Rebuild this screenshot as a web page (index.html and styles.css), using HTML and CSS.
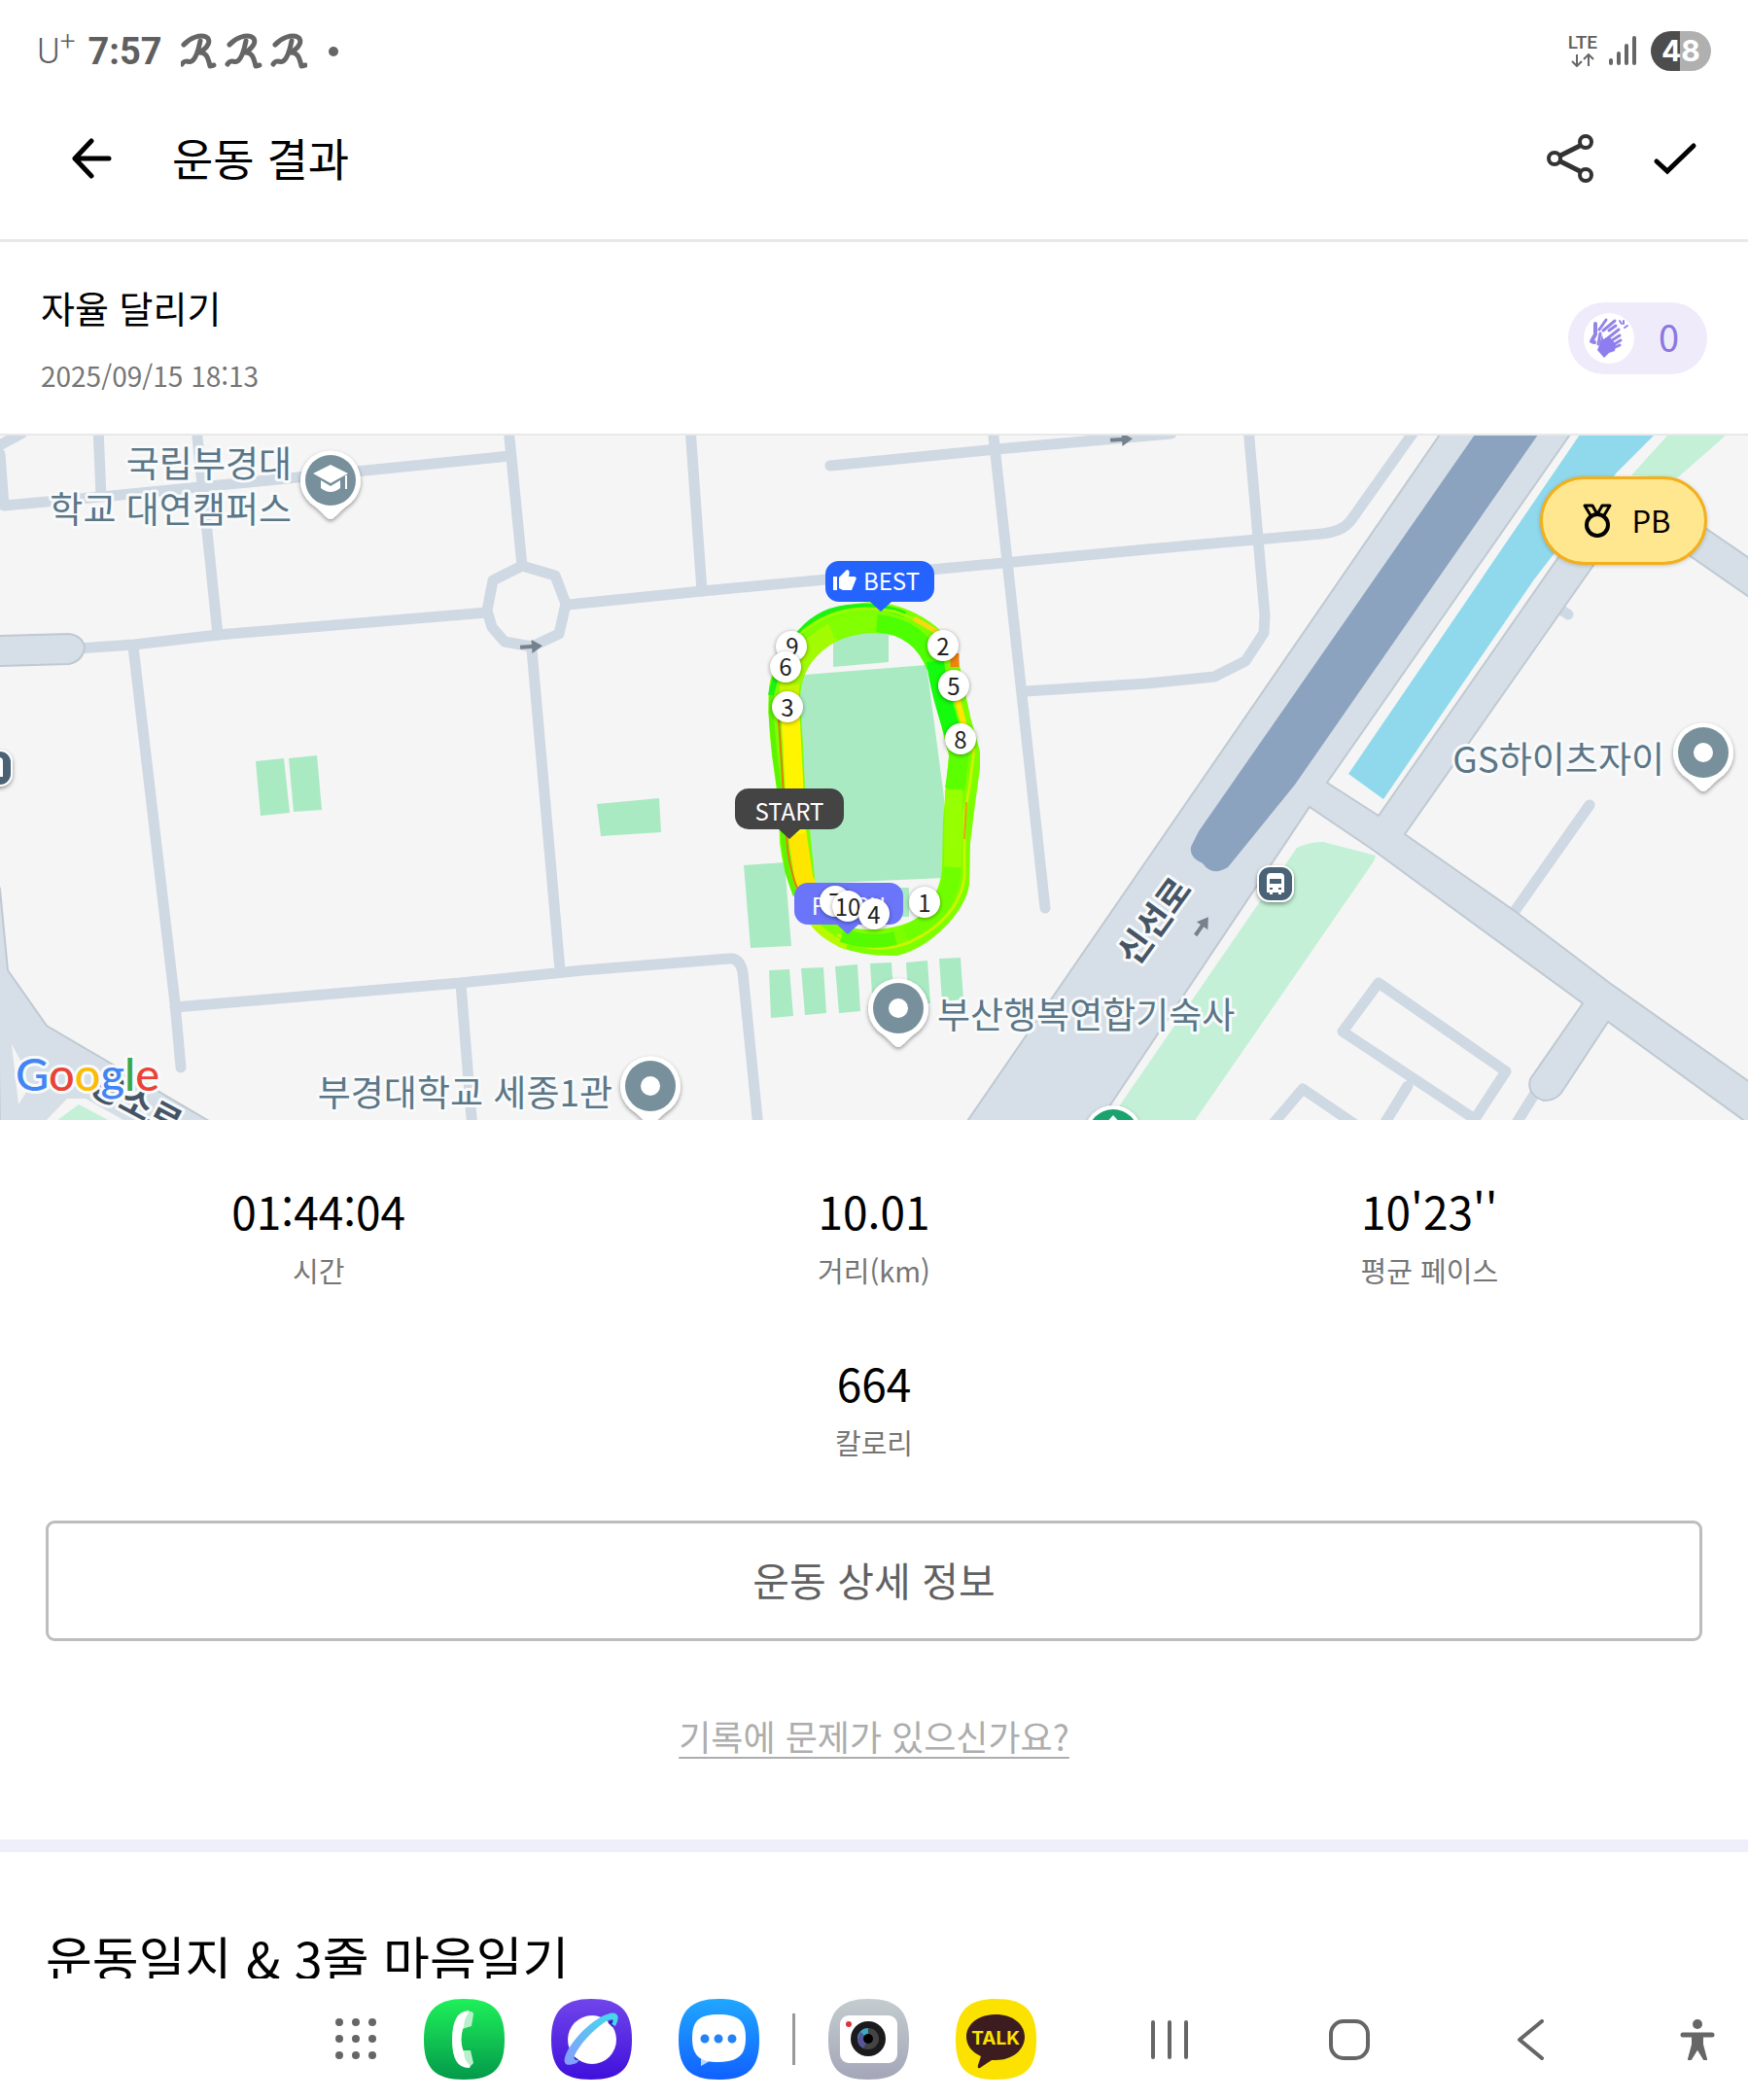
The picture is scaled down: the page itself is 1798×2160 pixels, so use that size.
FILE: index.html
```html
<!DOCTYPE html>
<html lang="ko">
<head>
    <meta charset="UTF-8">
    <meta name="viewport" content="width=device-width, initial-scale=1.0">
    <title>운동 결과</title>
    <link rel="stylesheet" href="styles.css">
</head>
<body>

<!-- Status bar -->
<div class="status-bar">
    <div class="status-left">
        <span class="carrier">U<sup>+</sup></span>
        <span class="clock">7:57</span>
        <svg class="notices" viewBox="0 0 130 38" aria-hidden="true">
            <defs>
                <g id="runner">
                    <path d="M3 12C9 5 20 1 26 4c6 3 2 12-8 16 8-1 10 5 12 14l4-1" stroke-width="5"/>
                    <path d="M20 8C18 18 15 27 11 29c-3 2-6-3-10 3" stroke-width="5"/>
                </g>
            </defs>
            <g fill="none" stroke="#666" stroke-linecap="round" stroke-linejoin="round">
                <use href="#runner"/>
                <use href="#runner" x="47"/>
                <use href="#runner" x="94"/>
            </g>
        </svg>
        <span class="more-dot"></span>
    </div>
    <div class="status-right">
        <div class="network">
            <span>LTE</span>
            <svg viewBox="0 0 24 14" aria-hidden="true">
                <path d="M6 1v11M1 8l5 5 5-5M18 13V2M13 6l5-5 5 5" fill="none" stroke="#666" stroke-width="2"/>
            </svg>
        </div>
        <svg class="signal" viewBox="0 0 28 30" aria-hidden="true">
            <path d="M2 25v3M10 18v10M18 10v18M26 2v26" stroke="#666" stroke-width="4" stroke-linecap="round"/>
        </svg>
        <span class="battery">48</span>
    </div>
</div>

<!-- App bar -->
<header class="app-bar">
    <button class="icon-button back" aria-label="뒤로">
        <svg viewBox="0 0 42 42"><path d="M39 21H4M21 3L4 21l17 18" fill="none" stroke="#000" stroke-width="5" stroke-linecap="round" stroke-linejoin="round"/></svg>
    </button>
    <h1>운동 결과</h1>
    <button class="icon-button share" aria-label="공유">
        <svg viewBox="0 0 50 50">
            <g fill="none" stroke="#333" stroke-width="4">
                <path d="M15 22L35 12M15 28l20 10" stroke-width="5"/>
                <circle cx="9" cy="25" r="6"/>
                <circle cx="41" cy="8" r="6"/>
                <circle cx="41" cy="42" r="6"/>
            </g>
        </svg>
    </button>
    <button class="icon-button done" aria-label="완료">
        <svg viewBox="0 0 46 34"><path d="M4 20l11 10L42 4" fill="none" stroke="#000" stroke-width="5" stroke-linecap="round"/></svg>
    </button>
</header>

<main class="content">
    <section class="session">
        <div>
            <h2>자율 달리기</h2>
            <p class="date">2025/09/15 18:13</p>
        </div>
        <button class="clap-button" aria-label="박수 0">
            <svg viewBox="0 0 52 52" aria-hidden="true">
                <circle cx="26" cy="26" r="26" fill="#fff"/>
                <g fill="none" stroke="#9384e8" stroke-width="3" stroke-linecap="round" stroke-linejoin="round">
                    <path d="M12 11v11l-4 7 3 1" stroke-width="4"/>
                    <path d="M16 17l7-10M20 18L32 8M26 18l7-5M17 21l-2 11"/>
                    <path d="M22 28l14-11M26 30l11-7M28 34l10-6M28 37l9-4" stroke-width="3"/>
                    <path d="M37 8l2 3M41 8v3M42 15l3-2" stroke-width="2"/>
                </g>
                <path d="M19 22l1 5 6-3 7 8-1 7-6 2-5 5-7-8 2-5z" fill="#8e7df0"/>
            </svg>
            <span>0</span>
        </button>
    </section>

    <!-- Route map -->
    <section class="map">
        <svg class="map-canvas" viewBox="0 448 1798 704" role="img" aria-label="달리기 경로 지도">
            <defs>
                <filter id="shadow" x="-30%" y="-30%" width="160%" height="170%">
                    <feDropShadow dx="0" dy="2" stdDeviation="2" flood-opacity=".4"/>
                </filter>
                <g id="pin">
                    <path d="M0 40c-4 0-7-6-16-13A31 31 0 1 1 16 27C7 34 4 40 0 40z" fill="#fff" filter="url(#shadow)"/>
                    <circle r="26" fill="#78909c"/>
                </g>
                <g id="bus">
                    <rect x="-19" y="-19" width="38" height="38" rx="13" fill="#fff" filter="url(#shadow)"/>
                    <rect x="-17" y="-17" width="34" height="34" rx="11" fill="#4a6275"/>
                    <path d="M-9-7q0-4 4-4H5q4 0 4 4V9H6v2H3V9h-6v2h-3V9h-3z" fill="#fff"/>
                    <path d="M-6-5H6v5H-6zM-6 4h3v2h-3zM3 4h3v2H3z" fill="#4a6275"/>
                </g>
                <path id="arrow" d="M-11-2H1v-5L12 0 1 7V2h-12z" fill="#75818d"/>
            </defs>

            <rect y="448" width="1798" height="704" fill="#f5f5f5"/>

            <!-- small roads -->
            <g class="road">
                <path d="M-4 460L22 446M0 467l4 53 100-9 202-20 218-22M101 440l3 71M202 440l22 213"/>
                <path d="M80 667l58-4 86-10 277-23M584 622l138-14 310-29 148-14 180-16q20-2 29-13l66-93"/>
                <path d="M537 582l34 10 11 29-7 31-28 13-28-5-13-15-5-17 6-31z"/>
                <path d="M523 440l14 142M547 668l29 330M137 665l43 367 6 66M180 1036l293-25 127-13 150-12q11-1 14 14l16 160M474 1012l12 150"/>
                <path d="M710 440l12 168M854 479l171-17 180-16M1021 440l54 494M1055 711l125-8 69-7 32-16 19-29 1-18-17-193"/>
                <path d="M1635 828l-79 112M1604 626l9 6M1418 1011l131 91-32 49-136-90zM1448 1117l-26 42M1306 1160l34-40 56 38M1578 1126l-20 32"/>
            </g>

            <!-- parks and courts -->
            <g fill="#c3f0d6">
                <path d="M1716 447h60l-50 44-48-2zM1334 872q12-6 27-6l54 14-2 6-185 268h-88z"/>
            </g>
            <g fill="#a9eac3">
                <path d="M263 783l29-3 6 56-30 3zM297 780l29-3 5 56-29 2zM614 827l64-6 2 35-62 4zM765 890l42-3 7 86-42 2z"/>
                <path d="M791 998l21-1 4 48-23 2zM824 996l23-1 3 47-22 2zM859 994l23-2 3 48-22 2zM895 991l22-1 3 47-22 2zM932 990l22-2 3 44-22 4zM966 986l22-1 3 43-22 2z"/>
                <path d="M815 695l138-11 8 60 10 76v83l-136 6zM857 650l57-2v33l-57 5zM920 913h15v30h-15z"/>
            </g>

            <!-- main roads -->
            <g class="main-road">
                <path d="M-4 654l75-2q14 2 16 14-2 14-16 17l-75 2z"/>
                <path d="M-4 900l4 15 8 83 40 57 172 101-172 4-48 4z"/>
                <path d="M1700 506l102 70v40l-62-43-50-33z"/>
                <path d="M1483 444L993 1156h136l218-326 65 44 216 158-54 78q-4 16 14 22 12 0 18-8l48-73 150 109v-44l-147-104-99-75-113-79 195-278 40-60h-40l-222 319-53-34 252-361z"/>
            </g>
            <path d="M44 1156l25-26h19l46 26z" fill="#f5f5f5"/>
            <path d="M54 1156l27-20 38 20z" fill="#c3f0d6"/>
            <path d="M12 1074l13 24 4 22-10 16z" fill="#f5f5f5"/>
            <path d="M1517 447h65l-250 360-69 85q-16 10-26-4-14-6-12-17l8-16z" fill="#8ba3bf"/>
            <path d="M1625 447h77l-39 39-85 110-155 226-36-26z" fill="#90d9ec"/>

            <use href="#arrow" transform="translate(546 665) rotate(-4)"/>
            <use href="#arrow" transform="translate(1153 452) rotate(-4)"/>
            <use href="#arrow" transform="translate(1236 953) rotate(-55)"/>

            <!-- running track -->
            <path fill="#7dff00" stroke="#7dff00" stroke-width="2" stroke-linejoin="round" fill-rule="evenodd" d="M903 620Q855 620 820 653 796 680 792 707 790 733 795 777L802 827 803 867Q806 895 817 920 828 950 863 973 890 983 922 982 953 975 980 943 994 925 996 910L997 867 1002 827 1007 790V773L997 737 985 680Q980 660 962 645 937 625 903 620zM897 650Q863 652 843 670 822 690 822 720L825 767 827 810 832 853 837 903Q840 935 850 947 865 957 900 957 930 955 947 943 968 920 970 893L971 843 975 800 977 777 970 750 960 703Q950 655 913 651z"/>
            <g fill="none" stroke-linejoin="round">
                <path d="M794 707l-1 26 4 44 7 50 2 40 4 30 8 24" stroke="#5cf500" stroke-width="5"/>
                <path d="M793 715q6-30 25-58 20-28 53-32 35-4 60 7" stroke="#1df312" stroke-width="6"/>
                <path d="M812 708q8-38 45-58" stroke="#a2fb00" stroke-width="20"/>
                <path d="M855 648q22-8 50-7" stroke="#82ff00" stroke-width="18"/>
                <path d="M902 641q45 4 60 45" stroke="#4dff00" stroke-width="18"/>
                <path d="M812 727V704" stroke="#c8f500" stroke-width="20"/>
                <path d="M813 735l4 75 3 50" stroke="#fff500" stroke-width="19"/>
                <path d="M820 858l7 46 6 12" stroke="#ffe600" stroke-width="19"/>
                <path d="M801 740l5 77 4 55q4 30 12 46" stroke="#e87b08" stroke-width="2"/>
                <path d="M962 680q4 34 22 85" stroke="#14fb0e" stroke-width="18"/>
                <path d="M987 772q-2 20-5 40" stroke="#5cff00" stroke-width="20"/>
                <path d="M981 812l-1 80" stroke="#96ff00" stroke-width="18"/>
                <path d="M980 892q-4 48-48 70" stroke="#70ff00" stroke-width="18"/>
                <path d="M820 655q40-38 100-26l24 9 24 16" stroke="#9dfc00" stroke-width="3"/>
                <path d="M940 636l24 14" stroke="#f6d913" stroke-width="5"/>
                <path d="M982 672v14" stroke="#f28110" stroke-width="9"/>
                <path d="M985 720l7 27" stroke="#ffe500" stroke-width="6"/>
                <path d="M1002 770l-4 34-6 34v65q-6 42-56 66-40 16-75-8" stroke="#c9f500" stroke-width="3"/>
                <path d="M994 825l-2 38" stroke="#e0a612" stroke-width="2"/>
                <path d="M837 949q10 14 34 24" stroke="#b8fb00" stroke-width="8"/>
                <path d="M866 962q30 10 55 3" stroke="#57fb00" stroke-width="14"/>
            </g>

            <!-- places -->
            <g class="place">
                <text x="300" y="491" text-anchor="end">국립부경대</text>
                <text x="300" y="538" text-anchor="end">학교 대연캠퍼스</text>
                <text x="964" y="1058">부산행복연합기숙사</text>
                <text x="630" y="1138" text-anchor="end">부경대학교 세종1관</text>
                <text x="1712" y="795" text-anchor="end">GS하이츠자이</text>
            </g>
            <g class="street">
                <text transform="translate(1188 948) rotate(-54)" y="12" text-anchor="middle">신선로</text>
                <text transform="translate(140 1136) rotate(28)" y="12" text-anchor="middle">용소로</text>
            </g>
            <use href="#pin" x="340" y="494"/>
            <path d="M340 478l18 9-18 10-18-10zM330 494v8q10 8 20 0v-8l-10 6zM355 489h2v14h-2z" fill="#fff"/>
            <use href="#pin" x="924" y="1037"/>
            <circle cx="924" cy="1037" r="10" fill="#fff"/>
            <use href="#pin" x="669" y="1117"/>
            <circle cx="669" cy="1117" r="10" fill="#fff"/>
            <use href="#pin" x="1752" y="774"/>
            <circle cx="1752" cy="774" r="10" fill="#fff"/>
            <use href="#bus" x="1312" y="909"/>
            <use href="#bus" x="-6" y="790"/>
            <circle cx="1145" cy="1167" r="30" fill="#fff" filter="url(#shadow)"/>
            <circle cx="1145" cy="1167" r="26" fill="#1aa36f"/>
            <path d="M1145 1147l8 9h-16z" fill="#fff"/>

            <text class="google" x="16" y="1122"><tspan fill="#4285f4">G</tspan><tspan fill="#ea4335">o</tspan><tspan fill="#fbbc05">o</tspan><tspan fill="#4285f4">g</tspan><tspan fill="#34a853">l</tspan><tspan fill="#ea4335">e</tspan></text>

            <!-- route markers -->
            <g class="flag">
                <path d="M863 577h84a14 14 0 0 1 14 14v14a14 14 0 0 1-14 14h-30l-11 10-11-10h-32a14 14 0 0 1-14-14v-14a14 14 0 0 1 14-14z" fill="#2563ff"/>
                <path d="M857 593h4v14h-4zM863 594l8-8q4 0 2 7h6q3 1 1 4l-4 10h-9l-4-2z" fill="#fff"/>
                <text x="917" y="607">BEST</text>
                <path d="M770 811h84a14 14 0 0 1 14 14v14a14 14 0 0 1-14 14h-31l-11 10-11-10h-31a14 14 0 0 1-14-14v-14a14 14 0 0 1 14-14z" fill="#444"/>
                <text x="812" y="844">START</text>
                <path d="M831 908h84a14 14 0 0 1 14 14v15a14 14 0 0 1-14 14h-32l-11 10-11-10h-30a14 14 0 0 1-14-14v-15a14 14 0 0 1 14-14z" fill="#6b75fa"/>
                <text x="873" y="941">FINISH</text>
            </g>
            <g class="km">
                <circle cx="814" cy="665" r="16"/><text x="815" y="674">9</text>
                <circle cx="808" cy="686" r="16"/><text x="808" y="695">6</text>
                <circle cx="810" cy="727" r="16"/><text x="810" y="737">3</text>
                <circle cx="970" cy="664" r="16"/><text x="970" y="674">2</text>
                <circle cx="981" cy="705" r="16"/><text x="981" y="715">5</text>
                <circle cx="988" cy="760" r="16"/><text x="988" y="770">8</text>
                <circle cx="859" cy="927" r="16"/><text x="859" y="937">7</text>
                <circle cx="951" cy="928" r="16"/><text x="951" y="938">1</text>
                <circle cx="872" cy="932" r="16"/><text x="872" y="942">10</text>
                <circle cx="899" cy="940" r="16"/><text x="899" y="950">4</text>
            </g>
        </svg>
        <button class="pb-button">
            <svg viewBox="0 0 32 36" aria-hidden="true">
                <g fill="none" stroke="#000" stroke-width="4" stroke-linejoin="round">
                    <circle cx="16" cy="23" r="11"/>
                    <path d="M9 13L3 3h8l5 9 5-9h8l-6 10" stroke-width="3"/>
                </g>
            </svg>
            PB
        </button>
    </section>

    <!-- Summary -->
    <dl class="stats">
        <div class="stat"><dd>01:44:04</dd><dt>시간</dt></div>
        <div class="stat"><dd>10.01</dd><dt>거리(km)</dt></div>
        <div class="stat"><dd>10'23''</dd><dt>평균 페이스</dt></div>
        <div class="stat"><dd>664</dd><dt>칼로리</dt></div>
    </dl>

    <button class="detail-button">운동 상세 정보</button>
    <a class="report-link" href="#">기록에 문제가 있으신가요?</a>

    <section class="diary">
        <h2>운동일지 &amp; 3줄 마음일기</h2>
    </section>
</main>

<!-- Task bar -->
<nav class="task-bar">
    <div class="apps">
        <button class="nav-button" aria-label="앱 목록">
            <svg class="drawer" viewBox="0 0 43 43">
                <path d="M4 4h0M21 4h0M38 4h0M4 21h0M21 21h0M38 21h0M4 38h0M21 38h0M38 38h0" stroke="#666" stroke-width="8" stroke-linecap="round"/>
            </svg>
        </button>
        <button class="nav-button" aria-label="전화">
            <svg class="app" viewBox="0 0 83 83">
                <defs>
                    <path id="tile" d="M41 0C71 0 83 12 83 42S71 83 41 83 0 71 0 42 12 0 41 0z"/>
                    <linearGradient id="green" x2="0" y2="1"><stop stop-color="#1ff05a"/><stop offset="1" stop-color="#03994a"/></linearGradient>
                    <linearGradient id="violet" x2="0" y2="1"><stop stop-color="#7145ea"/><stop offset="1" stop-color="#3f10dc"/></linearGradient>
                    <linearGradient id="blue" x2="0" y2="1"><stop stop-color="#20a7ff"/><stop offset="1" stop-color="#1060ff"/></linearGradient>
                    <linearGradient id="silver" x2="0" y2="1"><stop stop-color="#c3cccf"/><stop offset="1" stop-color="#a4a6b8"/></linearGradient>
                    <linearGradient id="ring" x1="1" x2="0" y2="1"><stop stop-color="#40ddeb"/><stop offset="1" stop-color="#879bff"/></linearGradient>
                </defs>
                <use href="#tile" fill="url(#green)"/>
                <path d="M41 15l7-2q3 0 3 3l-2 12-10 3zM39 53l9 0 3 13-5 5z" fill="#b9f0cb"/>
                <path d="M46 12q-17 1-17 30t17 29q3 0 0-4-4-4-5-12-5-13 0-27 1-9 4-12 3-4 1-4z" fill="#fff"/>
            </svg>
        </button>
        <button class="nav-button" aria-label="인터넷">
            <svg class="app" viewBox="0 0 83 83">
                <use href="#tile" fill="url(#violet)"/>
                <circle cx="42" cy="42" r="25" fill="#fff"/>
                <path d="M58 24l8-3-3 8zM24 60l6 4-8 2z" fill="#3319b5"/>
                <path d="M62 26c4-6 0-6-7-2-13 9-25 22-31 34-1 4 0 5 5 5l-3 3c-8 3-14 3-12-6C20 42 44 19 60 15c9-2 11 4 6 13z" fill="url(#ring)"/>
            </svg>
        </button>
        <button class="nav-button" aria-label="메시지">
            <svg class="app" viewBox="0 0 83 83">
                <use href="#tile" fill="url(#blue)"/>
                <path d="M23 61v8l9-5z" fill="#bcd7ff"/>
                <path d="M41 16c20 0 28 6 28 24s-8 25-28 25-27-7-27-25 8-24 27-24z" fill="#fff"/>
                <path d="M27 41h0M41 41h0M55 41h0" stroke="#2382f5" stroke-width="9" stroke-linecap="round"/>
            </svg>
        </button>
        <span class="separator"></span>
        <button class="nav-button" aria-label="카메라">
            <svg class="app" viewBox="0 0 83 83">
                <use href="#tile" fill="url(#silver)"/>
                <rect x="12" y="17" width="59" height="49" rx="9" fill="#fff"/>
                <circle cx="21" cy="26" r="3" fill="#e0323c"/>
                <circle cx="41" cy="41" r="18" fill="#1b1b1d"/>
                <circle cx="41" cy="41" r="11" fill="#444"/>
                <path d="M30 41a11 11 0 0 1 11-11v11z" fill="#36a9c0"/>
                <path d="M30 41a11 11 0 0 0 6 10l5-10-8-7z" fill="#57569b"/>
                <circle cx="41" cy="41" r="5" fill="#000"/>
            </svg>
        </button>
        <button class="nav-button" aria-label="카카오톡">
            <svg class="app" viewBox="0 0 83 83">
                <use href="#tile" fill="#fbe200"/>
                <path d="M41 16c18 0 30 10 30 23S59 63 41 63h-4l-12 8q-3 1-2-3l3-9c-9-4-15-11-15-20 0-13 12-23 30-23z" fill="#3c1c1e"/>
                <text class="talk" x="41" y="47">TALK</text>
            </svg>
        </button>
    </div>
    <div class="keys">
        <button class="nav-button" aria-label="최근 앱">
            <svg class="key" viewBox="0 0 42 42"><path d="M4 3v36M21 3v36M38 3v36" stroke="#666" stroke-width="4" stroke-linecap="round"/></svg>
        </button>
        <button class="nav-button" aria-label="홈">
            <svg class="key" viewBox="0 0 42 42"><rect x="2" y="2" width="38" height="38" rx="13" fill="none" stroke="#666" stroke-width="4"/></svg>
        </button>
        <button class="nav-button" aria-label="이전">
            <svg class="key" viewBox="0 0 42 42"><path d="M34 2L11 21l23 19" fill="none" stroke="#666" stroke-width="4" stroke-linecap="round" stroke-linejoin="round"/></svg>
        </button>
        <button class="nav-button accessibility" aria-label="접근성">
            <svg class="key" viewBox="0 0 42 42">
                <g fill="#666" stroke="#666" stroke-linecap="round" stroke-linejoin="round">
                    <circle cx="21" cy="5" r="5" stroke="none"/>
                    <path d="M6 16h30" stroke-width="5"/>
                    <path d="M17 18h8v8l4 15-8-13-8 13 4-15z" stroke-width="4"/>
                </g>
            </svg>
        </button>
    </div>
</nav>

</body>
</html>
```

FILE: styles.css
```css
* {
    box-sizing: border-box;
}
body {
    margin: 0;
    height: 100vh;
    display: flex;
    flex-direction: column;
    background-color: #fff;
    color: #000;
    font-family: "Noto Sans CJK KR", sans-serif;
}
button {
    padding: 0;
    border: none;
    background: none;
    color: inherit;
    font-family: inherit;
    cursor: pointer;
}
svg {
    display: block;
}
h1, h2, p, dl, dd {
    margin: 0;
    font-weight: 400;
}

/* Status bar */
.status-bar {
    flex: none;
    height: 104px;
    padding: 0 38px;
    display: flex;
    align-items: center;
    justify-content: space-between;
    color: #5f5f5f;
    font-family: Roboto, sans-serif;
}
.status-left, .status-right {
    display: flex;
    align-items: center;
}
.status-left {
    padding-top: 2px;
}
.carrier {
    font-size: 36px;
    font-weight: 300;
    line-height: 40px;
    margin-right: 13px;
}
.carrier sup {
    font-size: 28px;
    line-height: 1px;
}
.clock {
    font-size: 38px;
    font-weight: 700;
    margin-right: 19px;
}
.notices {
    width: 130px;
    height: 38px;
}
.more-dot {
    width: 10px;
    height: 10px;
    margin-left: 22px;
    border-radius: 50%;
    background-color: #666;
}
.network {
    display: flex;
    flex-direction: column;
    align-items: center;
    gap: 3px;
    font-size: 19px;
    font-weight: 500;
    line-height: 16px;
}
.network svg {
    width: 24px;
    height: 14px;
}
.signal {
    width: 28px;
    height: 30px;
    margin: 0 15px 0 12px;
}
.battery {
    width: 62px;
    border-radius: 21px;
    background: linear-gradient(90deg, #4d4d4d 48%, #b0b0b0 48%);
    color: #fff;
    font-family: Inter, sans-serif;
    font-size: 30px;
    font-weight: 700;
    line-height: 41px;
    text-align: center;
}

/* App bar */
.app-bar {
    flex: none;
    height: 145px;
    padding: 0 52px 24px 73px;
    display: flex;
    align-items: center;
    border-bottom: 3px solid #e8e8e8;
}
.app-bar h1 {
    flex: 1;
    margin-left: 62px;
    padding-bottom: 4px;
    font-size: 46px;
    line-height: 60px;
}
.back svg {
    width: 42px;
    height: 42px;
}
.share svg {
    width: 50px;
    height: 50px;
}
.done svg {
    width: 46px;
    height: 34px;
    margin-left: 60px;
}

.content {
    flex: 1;
    min-height: 0;
    overflow: hidden;
    display: flex;
    flex-direction: column;
}
.content > * {
    flex: none;
}

/* Session title */
.session {
    padding: 43px 42px 40px;
    display: flex;
    align-items: center;
    justify-content: space-between;
    border-bottom: 2px solid #e8e8e8;
}
.session h2 {
    font-size: 38px;
    line-height: 48px;
}
.date {
    margin-top: 26px;
    color: #757575;
    font-size: 28px;
    line-height: 40px;
}
.clap-button {
    width: 143px;
    height: 74px;
    margin-bottom: 3px;
    padding: 0 29px 0 16px;
    display: flex;
    align-items: center;
    justify-content: space-between;
    border-radius: 37px;
    background-color: #efebfb;
    color: #8a78e0;
    font-size: 38px;
}
.clap-button span {
    padding-bottom: 4px;
    line-height: 40px;
}
.clap-button svg {
    width: 52px;
    height: 52px;
}

/* Map */
.map {
    position: relative;
}
.map-canvas {
    width: 100%;
    height: auto;
}
.road {
    fill: none;
    stroke: #cfd9e3;
    stroke-width: 11px;
    stroke-linecap: round;
    stroke-linejoin: round;
}
.main-road {
    fill: #d6dfe7;
    stroke: #bfc9d2;
    stroke-width: 2px;
}
.place {
    fill: #5b7686;
    font-size: 37px;
    font-weight: 400;
}
.street {
    fill: #465566;
    font-size: 36px;
    font-weight: 700;
}
.place, .street, .google {
    stroke: #f8fafb;
    stroke-width: 6px;
    stroke-linejoin: round;
    paint-order: stroke;
}
.google {
    font-family: Lato, sans-serif;
    font-size: 47px;
    font-weight: 500;
}
.flag text {
    fill: #fff;
    font-size: 24px;
    text-anchor: middle;
}
.km circle {
    fill: #fff;
    filter: drop-shadow(0 1px 2px rgba(0, 0, 0, 0.4));
}
.km text {
    fill: #222;
    font-size: 24px;
    text-anchor: middle;
}
.pb-button {
    position: absolute;
    top: 42px;
    right: 42px;
    width: 172px;
    height: 91px;
    padding: 0 0 2px 5px;
    display: flex;
    align-items: center;
    justify-content: center;
    gap: 20px;
    border: 3px solid #f3b01c;
    border-radius: 46px;
    background-color: #ffe78f;
    box-shadow: 0 1px 4px rgba(0, 0, 0, 0.2);
    font-size: 31px;
}
.pb-button svg {
    width: 32px;
    height: 36px;
}

/* Summary */
.stats {
    padding: 65px 42px 0;
    display: flex;
    flex-wrap: wrap;
    justify-content: center;
    row-gap: 68px;
}
.stat {
    width: calc(100% / 3);
    display: flex;
    flex-direction: column;
    gap: 13px;
    text-align: center;
}
.stat dd {
    font-size: 46px;
    line-height: 56px;
}
.stat dt {
    color: #757575;
    font-size: 29px;
    line-height: 40px;
}
.detail-button {
    height: 124px;
    margin: 61px 47px 0;
    padding-bottom: 4px;
    border: 3px solid #bdbdbd;
    border-radius: 9px;
    color: #616161;
    font-size: 41px;
}
.report-link {
    align-self: center;
    margin: 73px 0 83px;
    color: #adadad;
    font-size: 36px;
    line-height: 48px;
    text-decoration-thickness: 2px;
    text-underline-offset: 6px;
}
.diary {
    padding: 71px 47px;
    border-top: 13px solid #eeeffa;
}
.diary h2 {
    font-size: 52px;
    line-height: 76px;
}

/* Task bar */
.task-bar {
    flex: none;
    height: 125px;
    padding: 0 38px 0 345px;
    display: flex;
    align-items: center;
}
.apps {
    display: flex;
    align-items: center;
    gap: 48px;
}
.app {
    width: 83px;
    height: 83px;
}
.drawer {
    width: 43px;
    height: 43px;
}
.separator {
    width: 3px;
    height: 53px;
    margin: 0 -14px;
    background-color: #999;
}
.talk {
    fill: #fbe200;
    font-family: Inter, sans-serif;
    font-size: 19px;
    font-weight: 700;
    text-anchor: middle;
}
.keys {
    flex: 1;
    margin-left: 116px;
    display: flex;
    align-items: center;
    gap: 143px;
}
.accessibility {
    margin-left: auto;
}
.key {
    width: 42px;
    height: 42px;
}
/* the last key sits closer than the others */
.keys .accessibility {
    margin-left: -12px;
}
```
